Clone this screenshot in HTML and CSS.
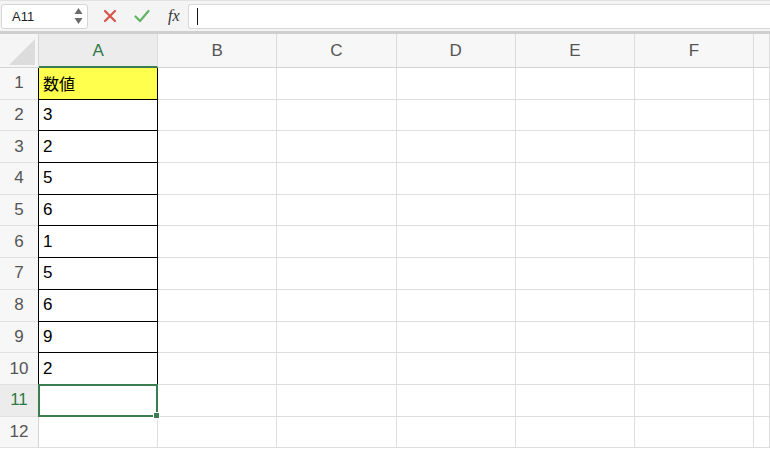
FILE: index.html
```html
<!DOCTYPE html>
<html lang="ja">
<head>
<meta charset="utf-8">
<link rel="stylesheet" href="styles.css">
</head>
<body>
<div class="fbar">
  <div class="namebox">
    <span class="nb-text">A11</span>
    <svg class="nb-arrows" width="9" height="18" viewBox="0 0 9 18"><polygon points="4.5,1 8.5,7 0.5,7" fill="#6b6b6b"/><polygon points="0.5,11 8.5,11 4.5,17" fill="#6b6b6b"/></svg>
  </div>
  <svg class="ico ico-x" width="14" height="14" viewBox="0 0 14 14"><path d="M2 2 L12 12 M12 2 L2 12" stroke="#d9534f" stroke-width="2.2" stroke-linecap="round"/></svg>
  <svg class="ico ico-ok" width="16" height="14" viewBox="0 0 16 14"><path d="M1.5 7.5 L6 12 L14.5 2" stroke="#62b466" stroke-width="2.2" fill="none" stroke-linecap="round" stroke-linejoin="round"/></svg>
  <span class="fx">fx</span>
  <div class="finput"><span class="caret"></span></div>
</div>
<div class="grid">
  <div class="corner"><svg width="38" height="33" viewBox="0 0 38 33"><polygon points="9,31 35,5 35,31" fill="#dcdcdc"/></svg></div>
  <div class="ch sel">A</div><div class="ch">B</div><div class="ch">C</div><div class="ch">D</div><div class="ch">E</div><div class="ch">F</div><div class="ch"></div>

  <div class="rh">1</div><div class="c a hd">数値</div><div class="c"></div><div class="c"></div><div class="c"></div><div class="c"></div><div class="c"></div><div class="c"></div>
  <div class="rh">2</div><div class="c a">3</div><div class="c"></div><div class="c"></div><div class="c"></div><div class="c"></div><div class="c"></div><div class="c"></div>
  <div class="rh">3</div><div class="c a">2</div><div class="c"></div><div class="c"></div><div class="c"></div><div class="c"></div><div class="c"></div><div class="c"></div>
  <div class="rh">4</div><div class="c a">5</div><div class="c"></div><div class="c"></div><div class="c"></div><div class="c"></div><div class="c"></div><div class="c"></div>
  <div class="rh">5</div><div class="c a">6</div><div class="c"></div><div class="c"></div><div class="c"></div><div class="c"></div><div class="c"></div><div class="c"></div>
  <div class="rh">6</div><div class="c a">1</div><div class="c"></div><div class="c"></div><div class="c"></div><div class="c"></div><div class="c"></div><div class="c"></div>
  <div class="rh">7</div><div class="c a">5</div><div class="c"></div><div class="c"></div><div class="c"></div><div class="c"></div><div class="c"></div><div class="c"></div>
  <div class="rh">8</div><div class="c a">6</div><div class="c"></div><div class="c"></div><div class="c"></div><div class="c"></div><div class="c"></div><div class="c"></div>
  <div class="rh">9</div><div class="c a">9</div><div class="c"></div><div class="c"></div><div class="c"></div><div class="c"></div><div class="c"></div><div class="c"></div>
  <div class="rh">10</div><div class="c a">2</div><div class="c"></div><div class="c"></div><div class="c"></div><div class="c"></div><div class="c"></div><div class="c"></div>
  <div class="rh rsel">11</div><div class="c active"><span class="handle"></span></div><div class="c"></div><div class="c"></div><div class="c"></div><div class="c"></div><div class="c"></div><div class="c"></div>
  <div class="rh">12</div><div class="c"></div><div class="c"></div><div class="c"></div><div class="c"></div><div class="c"></div><div class="c"></div><div class="c"></div>
</div>
</body>
</html>
```
FILE: styles.css
```css
html, body {
  margin: 0;
  padding: 0;
  background: #ffffff;
  overflow: hidden;
  width: 770px;
  height: 451px;
  font-family: "Liberation Sans", "Noto Sans CJK JP", sans-serif;
}

.fbar {
  height: 30px;
  background: #f4f4f4;
  border-top: 1px solid #e2e2e2;
  border-bottom: 3px solid #cfcfcf;
  display: flex;
  align-items: center;
  overflow: hidden;
}

.namebox {
  width: 87px;
  height: 25px;
  margin-left: 1px;
  background: #fff;
  border: 1px solid #d6d6d6;
  border-radius: 3px;
  box-sizing: border-box;
  display: flex;
  align-items: center;
  justify-content: space-between;
  padding: 0 4px 0 10px;
}
.nb-text {
  font-size: 13px;
  color: #222;
}
.nb-arrows {
  display: block;
}

.ico-x {
  margin-left: 15px;
}
.ico-ok {
  margin-left: 17px;
}
.fx {
  margin-left: 18px;
  font-family: "Liberation Serif", "DejaVu Serif", serif;
  font-style: italic;
  font-size: 16px;
  color: #333;
}
.finput {
  margin-left: 8px;
  flex: 1;
  height: 23px;
  background: #fff;
  border: 1px solid #d8d8d8;
  border-right: none;
  border-radius: 3px 0 0 3px;
  display: flex;
  align-items: center;
  padding-left: 8px;
}
.caret {
  width: 1px;
  height: 17px;
  background: #111;
}

.grid {
  display: grid;
  width: 770px;
  overflow: hidden;
  grid-template-columns: 39px repeat(6, 119.2px) 1fr;
  grid-template-rows: 34px repeat(12, 31.7px);
}

.corner {
  background: #f5f5f5;
  border-right: 1px solid #d4d4d4;
  border-bottom: 1px solid #d4d4d4;
  box-sizing: border-box;
}
.corner svg { display: block; }

.ch {
  background: #f7f7f7;
  border-right: 1px solid #dcdcdc;
  border-bottom: 1px solid #d4d4d4;
  box-sizing: border-box;
  display: flex;
  align-items: center;
  justify-content: center;
  font-size: 17px;
  color: #555;
}
.ch.sel {
  background: #ececec;
  color: #2f7a46;
  border-bottom: 2px solid #3b7d4f;
  padding-top: 1px;
}

.rh {
  background: #f7f7f7;
  border-right: 1px solid #d4d4d4;
  border-bottom: 1px solid #e0e0e0;
  box-sizing: border-box;
  display: flex;
  align-items: center;
  justify-content: center;
  font-size: 17px;
  color: #555;
}
.rh.rsel {
  background: #ececec;
  color: #2f7a46;
}

.c {
  border-right: 1px solid #dedede;
  border-bottom: 1px solid #dedede;
  box-sizing: border-box;
  display: flex;
  align-items: center;
  padding-left: 4px;
  font-size: 17px;
  color: #000;
  position: relative;
}
.c.a {
  border-right: 1px solid #000;
  border-bottom: 1px solid #000;
  box-shadow: -1px 0 0 #000;
}
.c.hd {
  background: #ffff4d;
  font-family: "Noto Sans CJK JP", sans-serif;
  font-size: 16px;
}

.c.active::after {
  content: "";
  position: absolute;
  left: -1px;
  top: -1px;
  right: -1px;
  bottom: -1px;
  border: 2px solid #3b7d4f;
}
.handle {
  position: absolute;
  right: -3px;
  bottom: -3px;
  width: 5px;
  height: 5px;
  background: #3b7d4f;
  border: 1px solid #fff;
  z-index: 2;
}
```
